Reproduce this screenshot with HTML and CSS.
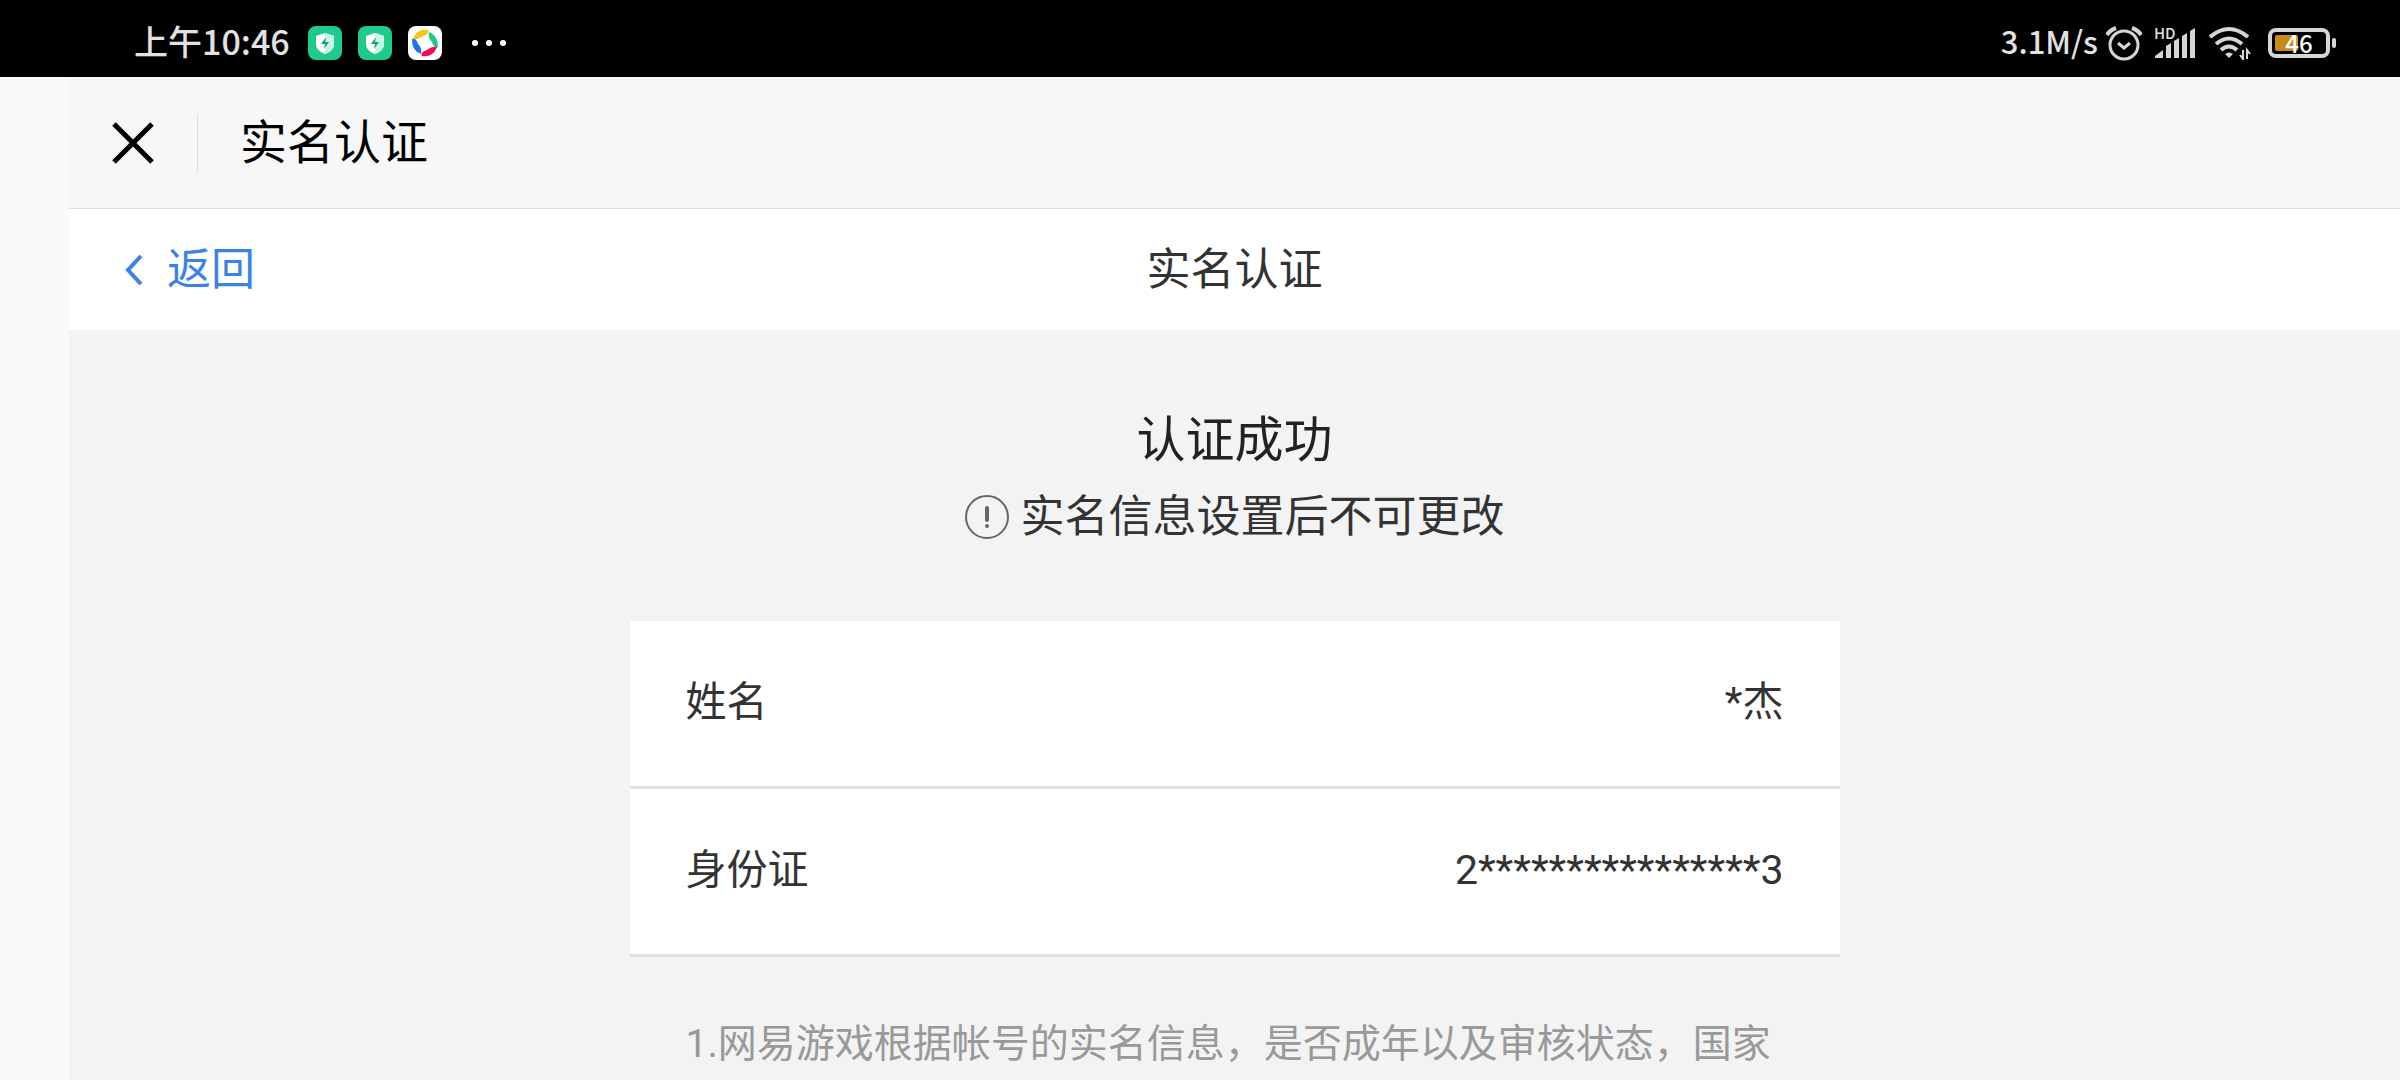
FILE: index.html
```html
<!DOCTYPE html>
<html lang="zh-CN">
<head>
    <meta charset="UTF-8">
    <meta name="viewport" content="width=device-width, initial-scale=1.0">
    <title>实名认证</title>
    <link rel="stylesheet" href="styles.css">
</head>
<body>

<div class="status-bar">
    <div class="status-left">
        <span class="time">上午10:46</span>
        <svg class="app-icon" viewBox="0 0 34 34">
            <rect width="34" height="34" rx="8" fill="#1ecb8a"/>
            <path d="M17 7l9 3v8c0 5-4 8-9 10-5-2-9-5-9-10v-8z" fill="#fff"/>
            <path d="M17 7l9 3v8c0 5-4 8-9 10z" fill="#c9f6e4"/>
            <path d="M18 11l-5 7h4l-1 5 5-7h-4z" fill="#1c9f76"/>
        </svg>
        <svg class="app-icon" viewBox="0 0 34 34">
            <rect width="34" height="34" rx="8" fill="#1ecb8a"/>
            <path d="M17 7l9 3v8c0 5-4 8-9 10-5-2-9-5-9-10v-8z" fill="#fff"/>
            <path d="M17 7l9 3v8c0 5-4 8-9 10z" fill="#c9f6e4"/>
            <path d="M18 11l-5 7h4l-1 5 5-7h-4z" fill="#1c9f76"/>
        </svg>
        <svg class="app-icon" viewBox="0 0 34 34">
            <rect width="34" height="34" rx="8" fill="#fff"/>
            <path d="M5 13C8 5 14 3 20 4c2 2-1 5-5 6-3 2-6 4-10 3z" fill="#fbc412"/>
            <path d="M21 6c7 3 9 8 9 15-3 1-5-1-6-5-3-3-4-6-3-10z" fill="#1ecb8a"/>
            <path d="M29 21c-3 8-9 10-15 9-2-2 1-5 5-6 3-2 6-4 10-3z" fill="#ee0f52"/>
            <path d="M13 28C6 25 4 20 4 13c3-1 5 1 6 5 3 3 4 6 3 10z" fill="#1677f0"/>
        </svg>
        <svg class="dots" viewBox="0 0 34 6" fill="#fff">
            <circle cx="3" cy="3" r="3"/>
            <circle cx="17" cy="3" r="3"/>
            <circle cx="31" cy="3" r="3"/>
        </svg>
    </div>
    <div class="status-right">
        <span class="speed">3.1M/s</span>
        <svg class="alarm" viewBox="0 0 36 36" fill="none" stroke="#d6d6d6" stroke-width="3">
            <circle cx="18" cy="20" r="14"/>
            <path d="M1 10q3-5 9-7M35 10q-3-5-9-7" stroke-width="4"/>
            <path d="M12 18l6 5 6-5"/>
        </svg>
        <div class="signal">
            <svg viewBox="0 0 42 34" fill="#d6d6d6">
                <path d="M1 32v-2l8-6v8zM12 32V20l5-3v15zM20 32V15l5-3v20zM28 32V10l5-3v25zM36 32V5l5-3v30z"/>
            </svg>
            <span class="signal-text">HD</span>
        </div>
        <svg class="wifi" viewBox="0 0 44 34" fill="none" stroke="#d6d6d6" stroke-width="4">
            <path d="M2 11q19-16 38 0M8 18q13-11 26 0M13 24q8-7 16 0"/>
            <path d="M17 28q4-3 8 0l-4 4z" fill="#d6d6d6" stroke="none"/>
            <path d="M35 24v9l-3-4M39 33v-9l3 4" stroke-width="2"/>
        </svg>
        <div class="battery">
            <span class="battery-level"></span>
            <span class="battery-text">46</span>
        </div>
    </div>
</div>

<div class="page">
    <header class="title-bar">
        <button class="close" aria-label="关闭">
            <svg viewBox="0 0 42 42" stroke="#000" stroke-width="5">
                <path d="M2 2l38 38M40 2L2 40"/>
            </svg>
        </button>
        <h1>实名认证</h1>
    </header>

    <nav class="nav-bar">
        <a href="#" class="back">
            <svg viewBox="0 0 18 30" fill="none" stroke="#3b82e6" stroke-width="4">
                <path d="M16 1L3 15l13 14"/>
            </svg>
            返回
        </a>
        <span class="nav-title">实名认证</span>
    </nav>

    <main class="content">
        <h2>认证成功</h2>
        <p class="tip">
            <svg viewBox="0 0 44 44" fill="none" stroke="#666">
                <circle cx="22" cy="22" r="21" stroke-width="2"/>
                <path d="M22 13v12" stroke-width="4" stroke-linecap="round"/>
                <circle cx="22" cy="31" r="2" fill="#666" stroke="none"/>
            </svg>
            实名信息设置后不可更改
        </p>

        <dl class="card">
            <div class="row">
                <dt>姓名</dt>
                <dd>*杰</dd>
            </div>
            <div class="row">
                <dt>身份证</dt>
                <dd>2****************3</dd>
            </div>
        </dl>

        <p class="note">1.网易游戏根据帐号的实名信息，是否成年以及审核状态，国家</p>
    </main>
</div>

</body>
</html>
```
FILE: styles.css
```css
* {
    box-sizing: border-box;
}

body {
    margin: 0;
    min-height: 100vh;
    display: flex;
    flex-direction: column;
    font-family: Roboto, "Noto Sans CJK SC", sans-serif;
    color: #333;
    background-color: #fafafa;
}

h1, h2, p, dl, dd {
    margin: 0;
    font-weight: normal;
}

svg {
    display: block;
    flex-shrink: 0;
}

/* status bar */
.status-bar {
    display: flex;
    justify-content: space-between;
    align-items: center;
    height: 77px;
    padding: 8px 64px 0 134px;
    background-color: #000;
    color: #e2e2e2;
    font-family: "Noto Sans CJK SC", sans-serif;
    font-weight: 500;
    line-height: 40px;
}

.status-left,
.status-right {
    display: flex;
    align-items: center;
    gap: 16px;
}

.status-right {
    gap: 12px;
}

.time,
.speed {
    font-size: 34px;
    padding-bottom: 3px;
}

.time {
    padding-right: 2px;
}

.speed {
    font-size: 31px;
}

.app-icon {
    width: 34px;
    height: 34px;
}

.dots {
    width: 34px;
    height: 6px;
    margin-left: 14px;
}

.alarm {
    width: 36px;
    height: 36px;
    margin-left: -4px;
}

.signal {
    position: relative;
}

.signal svg {
    width: 42px;
    height: 34px;
}

.signal-text {
    position: absolute;
    left: 0;
    top: -2px;
    font-size: 15px;
    line-height: 18px;
}

.wifi {
    width: 44px;
    height: 34px;
}

.battery {
    position: relative;
    display: flex;
    align-items: center;
    justify-content: center;
    width: 62px;
    height: 30px;
    margin: 0 6px 0 4px;
    border: 4px solid #d6d6d6;
    border-radius: 8px;
}

.battery::after {
    content: "";
    position: absolute;
    right: -10px;
    width: 4px;
    height: 10px;
    border-radius: 2px;
    background-color: #d6d6d6;
}

.battery-level {
    position: absolute;
    left: 3px;
    top: 3px;
    bottom: 3px;
    width: 23px;
    border-radius: 2px;
    background-color: #c98a1b;
}

.battery-text {
    position: relative;
    font-size: 24px;
    line-height: 22px;
    color: #fff;
}

/* page */
.page {
    flex: 1;
    display: flex;
    flex-direction: column;
    margin-left: 69px;
    background-color: #f3f3f3;
}

.title-bar {
    display: flex;
    align-items: center;
    height: 132px;
    padding-left: 43px;
    background-color: #f7f7f7;
    border-bottom: 1px solid #dcdcdc;
    color: #000;
}

.close {
    padding: 8px 43px 8px 0;
    background: none;
    border: none;
    border-right: 1px solid #dcdcdc;
    cursor: pointer;
}

.close svg {
    width: 42px;
    height: 42px;
}

.title-bar h1 {
    padding-left: 42px;
    font-size: 47px;
    line-height: 60px;
}

.nav-bar {
    display: grid;
    grid-template-columns: 1fr auto 1fr;
    align-items: center;
    height: 121px;
    padding: 0 56px;
    background-color: #fff;
    font-size: 44px;
    line-height: 60px;
}

.back {
    display: flex;
    align-items: center;
    gap: 24px;
    color: #3b82e6;
    text-decoration: none;
}

.back svg {
    width: 18px;
    height: 30px;
}

.content {
    flex: 1;
    display: flex;
    flex-direction: column;
    align-items: center;
    padding-top: 73px;
}

.content h2 {
    font-size: 49px;
    line-height: 76px;
    color: #222;
}

.tip {
    display: flex;
    align-items: center;
    gap: 12px;
    font-size: 44px;
    line-height: 76px;
}

.tip svg {
    width: 44px;
    height: 44px;
}

.card,
.note {
    width: 1210px;
    max-width: 100%;
}

.card {
    margin-top: 66px;
    background-color: #fff;
    font-size: 41px;
    line-height: 60px;
}

.row {
    display: flex;
    justify-content: space-between;
    align-items: center;
    height: 168px;
    padding: 0 56px 4px;
    border-bottom: 3px solid #e1e1e1;
}

.note {
    margin-top: 58px;
    padding-left: 56px;
    font-size: 39px;
    line-height: 58px;
    color: #999;
}
```
